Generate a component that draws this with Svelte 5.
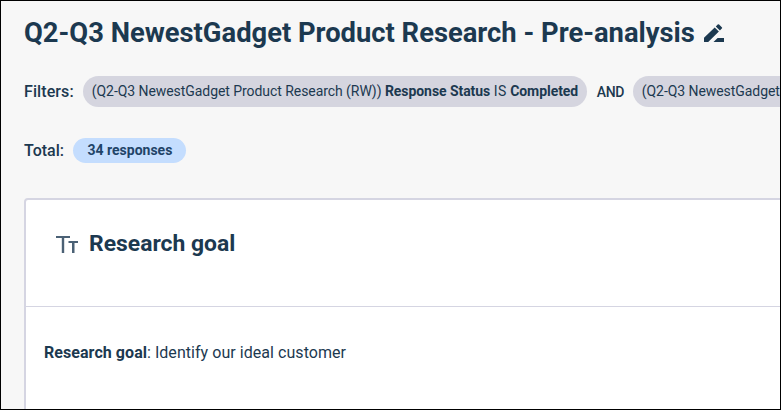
<script>
  const survey = '(Q2-Q3 NewestGadget Product Research (RW))';
  const filters = [
    { survey, field: 'Response Status', value: 'Completed' },
    { survey, field: 'Response Status', value: 'Completed' }
  ];
</script>

<main class="page">
  <header class="title-row">
    <h1>Q2-Q3 NewestGadget Product Research - Pre-analysis</h1>
    <svg class="edit" viewBox="0 0 20 18" width="20" height="18" aria-hidden="true">
      <path d="M0 18v-4.200L10.700 3.400l4.200 4.100L4.200 18zM11.800 2.400l1.900-1.900q.7-.7 1.400 0l2.700 2.700q.7.7 0 1.400l-1.900 1.900zM9.500 18l4.100-4H20V18z" fill="#1c3950" />
    </svg>
  </header>

  <div class="filters">
    <span class="label wide">Filters:</span>
    {#each filters as filter, i}
      {#if i > 0}<span class="join">AND</span>{/if}
      <span class="chip">{filter.survey} <b>{filter.field}</b> <span class="op">IS</span> <b>{filter.value}</b></span>
    {/each}
  </div>

  <div class="total">
    <span class="label">Total:</span>
    <span class="count">34 responses</span>
  </div>

  <section class="card">
    <div class="card-head">
      <svg viewBox="0 0 22 18" width="22" height="18" aria-hidden="true">
        <path d="M0 1h14v2H8.200V18H5.800V3H0zM12.500 6H22v2h-3.500v10H16V8h-3.500z" fill="#4b6175" />
      </svg>
      <h2>Research goal</h2>
    </div>
    <p><b>Research goal</b>: <span class="goal">Identify our ideal customer</span></p>
  </section>
</main>

<style>
  .page {
    box-sizing: border-box;
    width: 781px;
    height: 410px;
    border: 1px solid #000;
    background: #f7f7f7;
    padding-left: 23px;
    overflow: hidden;
    color: #1c3950;
    font-family: Roboto, sans-serif;
    white-space: nowrap;
  }
  h1, h2, p { margin: 0; }
  b { font-weight: 700; }
  .title-row {
    display: flex;
    align-items: center;
    gap: 9px;
    height: 34px;
    padding-top: 15px;
  }
  h1 { font-size: 27.35px; line-height: 34px; font-weight: 700; }
  .edit { flex: none; margin-bottom: 1px; }
  .filters {
    display: flex;
    align-items: center;
    height: 31px;
    margin-top: 26px;
  }
  .label { font-size: 16px; font-weight: 500; line-height: 20px; margin-right: 9px; }
  .wide { letter-spacing: 0.1px; }
  .chip {
    flex: none;
    background: #d5d5df;
    border-radius: 16px;
    height: 31px;
    line-height: 31px;
    padding: 0 9px;
    font-size: 14px;
    letter-spacing: -0.06px;
  }
  .op { letter-spacing: 0.5px; }
  .join { font-size: 14px; font-weight: 500; letter-spacing: -0.25px; margin: 0 8.500px 0 9.500px; }
  .total {
    display: flex;
    align-items: center;
    height: 25px;
    margin-top: 31px;
  }
  .count {
    background: #c4ddfe;
    border-radius: 13px;
    height: 25px;
    line-height: 25px;
    padding: 0 13.500px 0 14.500px;
    font-size: 14px;
    font-weight: 700;
    color: #1f4468;
  }
  .card {
    box-sizing: border-box;
    width: 900px;
    height: 300px;
    margin-top: 35px;
    border: 2px solid #d5d5e2;
    border-radius: 4px;
    background: #fff;
  }
  .card-head {
    display: flex;
    align-items: center;
    gap: 11px;
    height: 107px;
    box-sizing: border-box;
    padding: 0 0 18px 30px;
    border-bottom: 1px solid #d5d5e2;
  }
  .card-head svg { flex: none; }
  h2 { font-size: 22.9px; line-height: 30px; font-weight: 700; }
  p { padding: 36px 0 0 18px; font-size: 16px; line-height: 20px; }
  p b { letter-spacing: 0.06px; }
  .goal { letter-spacing: 0.05px; }
</style>
